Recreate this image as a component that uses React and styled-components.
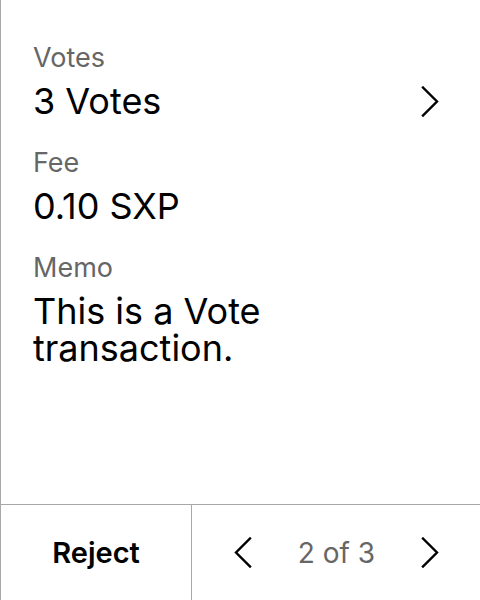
import React from 'react'
import styled, { createGlobalStyle } from 'styled-components'

const Global = createGlobalStyle`
  html, body { margin: 0; padding: 0; background: #fff; }
  body { font-family: Inter, "Noto Sans", sans-serif; }
`

const Screen = styled.div`
  width: 480px;
  height: 600px;
  box-sizing: border-box;
  border-left: 1px solid #a8a8a8;
  display: flex;
  flex-direction: column;
`

const Details = styled.div`
  flex: 1;
  padding: 42px 33px 0 32px;
  display: flex;
  flex-direction: column;
  gap: 27px;
`

const Field = styled.div`
  display: flex;
  flex-direction: column;
  gap: 9px;
`

const Label = styled.div`
  font-size: 27px;
  line-height: 32px;
  color: #666;
`

const Value = styled.div`
  font-size: 36px;
  line-height: 37px;
  color: #000;
  display: flex;
  align-items: center;
  justify-content: space-between;
  max-width: ${p => (p.$narrow ? '280px' : 'none')};
`

const Footer = styled.div`
  height: 95px;
  border-top: 1px solid #a8a8a8;
  display: flex;
`

const RejectButton = styled.button`
  width: 191px;
  border: none;
  border-right: 1px solid #a8a8a8;
  background: none;
  font-family: inherit;
  font-size: 29px;
  font-weight: 600;
  color: #000;
  padding: 0;
`

const Pager = styled.div`
  flex: 1;
  display: flex;
  align-items: center;
  justify-content: space-between;
  padding: 0 41px 0 42px;
`

const PageText = styled.span`
  font-size: 28px;
  color: #666;
`

const IconButton = styled.span`
  display: flex;
  align-items: center;
`

const Chevron = ({ left }) => (
  <svg width="18" height="31" viewBox="0 0 18 31" fill="none">
    <path
      d={left ? 'M16 1.5 L2 15.5 L16 29.5' : 'M2 1.5 L16 15.5 L2 29.5'}
      stroke="#000"
      strokeWidth="2.4"
      strokeLinecap="square"
    />
  </svg>
)

export default function App() {
  return (
    <>
      <Global />
      <Screen>
        <Details>
          <Field>
            <Label>Votes</Label>
            <Value>
              3 Votes
              <IconButton style={{ marginRight: 8 }}>
                <Chevron />
              </IconButton>
            </Value>
          </Field>
          <Field>
            <Label>Fee</Label>
            <Value>0.10 SXP</Value>
          </Field>
          <Field>
            <Label>Memo</Label>
            <Value $narrow>This is a Vote transaction.</Value>
          </Field>
        </Details>
        <Footer>
          <RejectButton>Reject</RejectButton>
          <Pager>
            <IconButton><Chevron left /></IconButton>
            <PageText>2 of 3</PageText>
            <IconButton><Chevron /></IconButton>
          </Pager>
        </Footer>
      </Screen>
    </>
  )
}
